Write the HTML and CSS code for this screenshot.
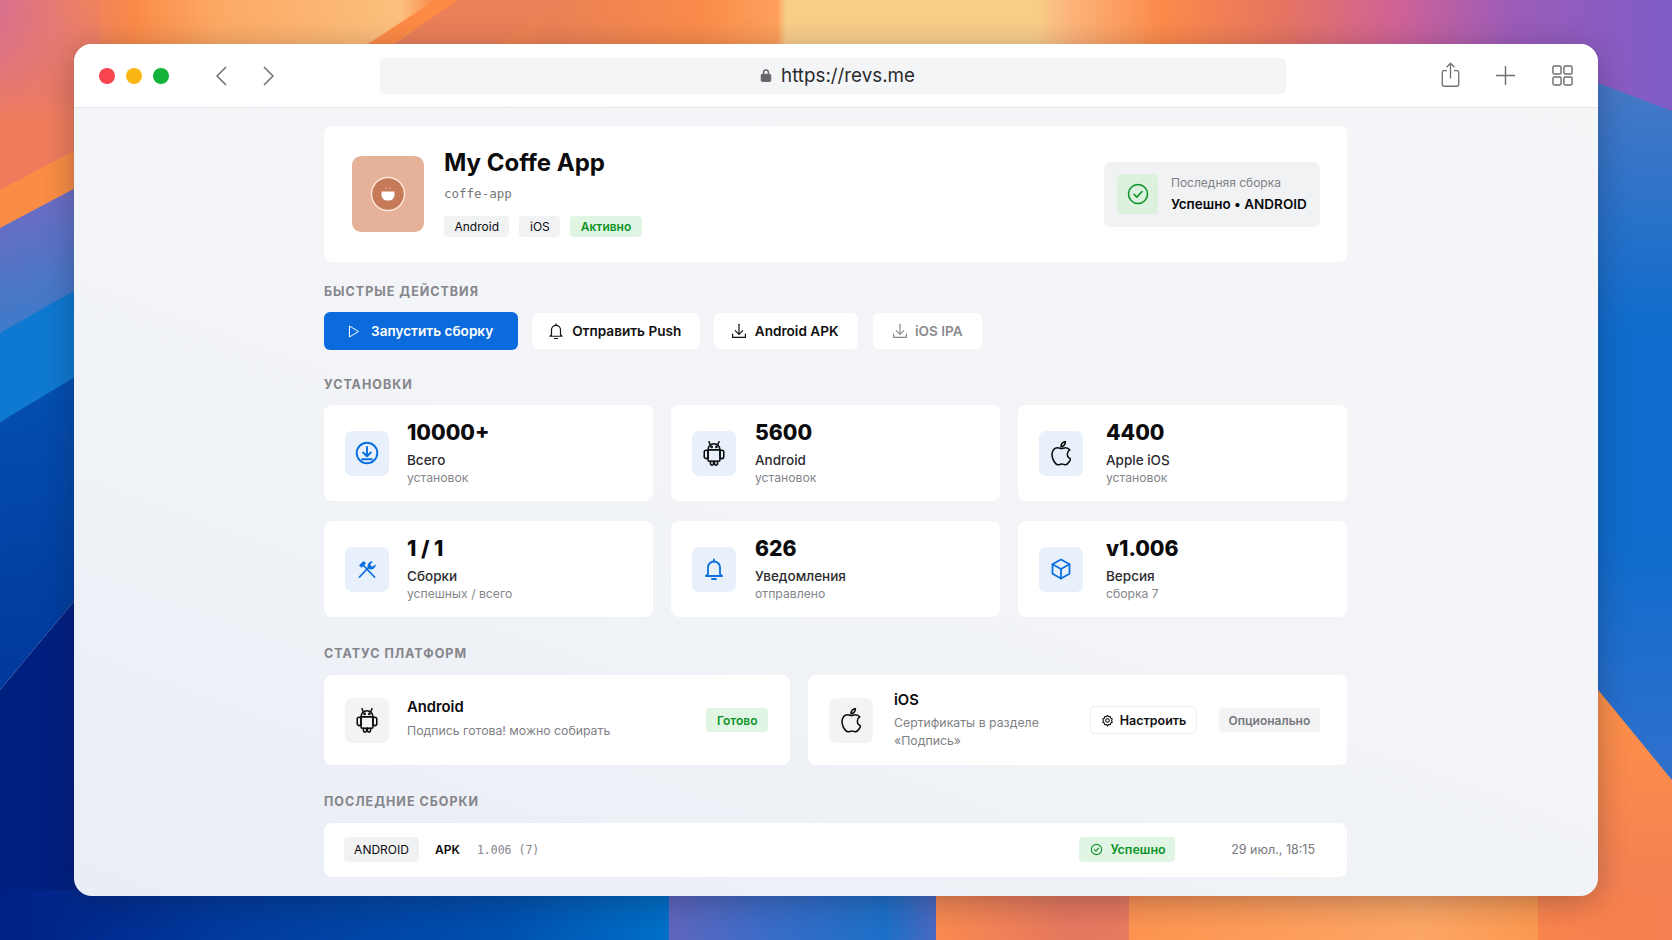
FILE: index.html
```html
<!DOCTYPE html>
<html lang="en">
<head>
  <meta charset="UTF-8" />
  <title>My Coffe App</title>
  <link rel="stylesheet" href="styles.css">
</head>
<body>
  <!-- wallpaper behind the window -->
  <svg class="wallpaper" viewBox="0 0 1672 940" preserveAspectRatio="none" aria-hidden="true">
    <defs>
      <linearGradient id="topBand" x1="0" x2="1672" y1="0" y2="0" gradientUnits="userSpaceOnUse">
        <stop offset="0" stop-color="#d8708f"/>
        <stop offset=".08" stop-color="#f98a48"/>
        <stop offset=".13" stop-color="#fca964"/>
        <stop offset=".24" stop-color="#fcc07e"/>
        <stop offset=".26" stop-color="#f98a48"/>
        <stop offset=".33" stop-color="#ea8055"/>
        <stop offset=".42" stop-color="#f98c4a"/>
        <stop offset=".465" stop-color="#fda05c"/>
        <stop offset=".47" stop-color="#f8cd88"/>
        <stop offset=".62" stop-color="#f8cd88"/>
        <stop offset=".64" stop-color="#fcb47a"/>
        <stop offset=".695" stop-color="#fb8a4a"/>
        <stop offset=".765" stop-color="#e67560"/>
        <stop offset=".835" stop-color="#cf6296"/>
        <stop offset=".905" stop-color="#9b5cb8"/>
        <stop offset="1" stop-color="#7f5cc8"/>
      </linearGradient>
      <linearGradient id="cornerLeft" x1="0" y1="0" x2="0" y2="120" gradientUnits="userSpaceOnUse">
        <stop offset="0" stop-color="#e0757c" stop-opacity="0"/>
        <stop offset="1" stop-color="#ee7c5c"/>
      </linearGradient>
      <linearGradient id="bottomBand" x1="0" x2="1672" y1="0" y2="0" gradientUnits="userSpaceOnUse">
        <stop offset="0" stop-color="#001f85"/>
        <stop offset=".13" stop-color="#003a9c"/>
        <stop offset=".3" stop-color="#0050ae"/>
        <stop offset=".4" stop-color="#0070c8"/>
        <stop offset=".4" stop-color="#5f66bd"/>
        <stop offset=".46" stop-color="#3a6cc8"/>
        <stop offset=".53" stop-color="#1c70c8"/>
        <stop offset=".56" stop-color="#4c68c0"/>
        <stop offset=".56" stop-color="#f98a50"/>
        <stop offset=".64" stop-color="#e5775f"/>
        <stop offset=".675" stop-color="#e87a60"/>
        <stop offset=".675" stop-color="#fd9350"/>
        <stop offset=".85" stop-color="#fda765"/>
        <stop offset=".92" stop-color="#fb9850"/>
        <stop offset=".92" stop-color="#f9844d"/>
        <stop offset="1" stop-color="#f47f50"/>
      </linearGradient>
      <linearGradient id="leftLilac" x1="0" y1="170" x2="40" y2="330" gradientUnits="userSpaceOnUse">
        <stop offset="0" stop-color="#7a68c2"/>
        <stop offset="1" stop-color="#3a7cc9"/>
      </linearGradient>
      <linearGradient id="leftDeep" x1="0" y1="380" x2="40" y2="660" gradientUnits="userSpaceOnUse">
        <stop offset="0" stop-color="#0550b0"/>
        <stop offset="1" stop-color="#003a9c"/>
      </linearGradient>
      <linearGradient id="rightBlue" x1="0" y1="90" x2="0" y2="780" gradientUnits="userSpaceOnUse">
        <stop offset="0" stop-color="#4578c6"/>
        <stop offset=".35" stop-color="#0f6ccc"/>
        <stop offset=".65" stop-color="#0f6ccc"/>
        <stop offset="1" stop-color="#3170cc"/>
      </linearGradient>
      <linearGradient id="rightOrange" x1="0" y1="700" x2="0" y2="940" gradientUnits="userSpaceOnUse">
        <stop offset="0" stop-color="#fd9049"/>
        <stop offset="1" stop-color="#f07c55"/>
      </linearGradient>
    </defs>
    <rect width="1672" height="130" fill="url(#topBand)"/>
    <polygon points="435,0 458,0 394,44 368,44" fill="#fd8a45"/>
    <polygon points="458,0 560,0 500,44 394,44" fill="#ea7f58"/>
    <polygon points="0,0 100,0 100,240 0,240" fill="url(#cornerLeft)"/>
    <polygon points="0,190 100,137 100,190 0,228" fill="#f98d45"/>
    <polygon points="0,228 100,175 100,300 0,333" fill="url(#leftLilac)"/>
    <polygon points="0,333 100,276 100,370 0,422" fill="#0f78d0"/>
    <polygon points="0,422 100,362 100,570 0,690" fill="url(#leftDeep)"/>
    <polygon points="0,690 100,570 100,940 0,940" fill="#00207f"/>
    <polygon points="1590,80 1672,111 1672,790 1590,680" fill="url(#rightBlue)"/>
    <polygon points="1590,680 1672,780 1672,940 1590,940" fill="url(#rightOrange)"/>
    <rect y="890" width="1672" height="50" fill="url(#bottomBand)"/>
  </svg>

  <svg class="sprite" aria-hidden="true">
    <symbol id="i-bell" viewBox="0 0 24 24">
      <path d="M6 17V10.500a6 6 0 0 1 12 0V17l2 2H4z"/><path d="M10 22h4"/><path d="M12 2.500v2"/>
    </symbol>
    <symbol id="i-download" viewBox="0 0 24 24">
      <path d="M12 3v13"/><path d="M7 11.500l5 5 5-5"/><path d="M3.500 16v4.500h17V16"/>
    </symbol>
    <symbol id="i-android" viewBox="2.800 2.200 18.400 21">
      <path d="M7 9.500a5 5 0 0 1 10 0z"/><path d="M8.900 5.300 7.800 2.800"/><path d="M15.100 5.300l1.100-2.500"/>
      <path d="M7 9.500h10v8.700a1 1 0 0 1-1 1H8a1 1 0 0 1-1-1z"/>
      <rect x="3.800" y="10" width="3.200" height="7" rx="1.600"/><rect x="17" y="10" width="3.200" height="7" rx="1.600"/>
      <path d="M9 19.200v2a1.300 1.300 0 0 0 2.600 0v-2"/><path d="M12.400 19.200v2a1.300 1.300 0 0 0 2.600 0v-2"/>
      <circle class="dot" cx="10" cy="7.200" r=".5"/><circle class="dot" cx="14" cy="7.200" r=".5"/>
    </symbol>
    <symbol id="i-apple" viewBox="4.400 2.600 15.200 19.400">
      <path d="M16.900 12.800c0-2.200 1.800-3.200 1.900-3.300-1-1.500-2.600-1.700-3.200-1.700-1.300-.1-2.600.8-3.300.8s-1.700-.8-2.900-.8c-1.500 0-2.900.9-3.600 2.200-1.600 2.700-.4 6.700 1.100 8.900.7 1.100 1.600 2.300 2.800 2.200 1.100 0 1.600-.7 2.900-.7s1.700.7 2.900.7 2-1.100 2.700-2.200c.9-1.200 1.200-2.400 1.200-2.500-.1 0-2.500-.9-2.500-3.600z"/>
      <path d="M14.500 5.800c.6-.7 1-1.700.9-2.700-.9 0-1.900.6-2.500 1.300-.5.600-1 1.600-.9 2.600 1 .1 1.900-.5 2.500-1.200z"/>
    </symbol>
    <symbol id="i-check" viewBox="0 0 24 24">
      <circle cx="12" cy="12" r="9.500"/><path d="M8 12.300l2.800 2.800 5.200-5.600"/>
    </symbol>
  </svg>

  <div class="window">
    <header class="toolbar">
      <div class="lights"><span class="light red"></span><span class="light yellow"></span><span class="light green"></span></div>
      <div class="arrows">
        <svg class="tb-icon" viewBox="0 0 12 20"><path d="M11 1 2 10l9 9"/></svg>
        <svg class="tb-icon" viewBox="0 0 12 20"><path d="M1 1l9 9-9 9"/></svg>
      </div>
      <div class="address">
        <svg class="lock" viewBox="0 0 20 24"><rect x="2" y="10" width="16" height="12" rx="2"/><path class="shackle" d="M6 10V7a4 4 0 0 1 8 0v3"/></svg>
        <span>https://revs.me</span>
      </div>
      <div class="tb-actions">
        <svg class="tb-icon share" viewBox="0 0 24 30"><path d="M8 10H4.500a2 2 0 0 0-2 2v14a2 2 0 0 0 2 2h15a2 2 0 0 0 2-2V12a2 2 0 0 0-2-2H16"/><path d="M12 19V2"/><path d="M7.500 6 12 1.500 16.500 6"/></svg>
        <svg class="tb-icon plus" viewBox="0 0 22 22"><path d="M11 1v20"/><path d="M1 11h20"/></svg>
        <svg class="tb-icon grid-icon" viewBox="0 0 22 22"><rect x="1" y="1" width="8.500" height="8.500" rx="1.500"/><rect x="12.500" y="1" width="8.500" height="8.500" rx="1.500"/><rect x="1" y="12.500" width="8.500" height="8.500" rx="1.500"/><rect x="12.500" y="12.500" width="8.500" height="8.500" rx="1.500"/></svg>
      </div>
    </header>

    <main class="content">
      <section class="app-card">
        <div class="app-logo">
          <svg viewBox="0 0 36 36">
            <circle cx="18" cy="18" r="16.500" fill="#c67a58" stroke="#fbe8da" stroke-width="1.500"/>
            <path d="M11.500 15.500h13v3.500a5.500 5.500 0 0 1-5.500 5.500h-2a5.500 5.500 0 0 1-5.500-5.500z" fill="#fff"/>
            <path d="M16 11.800v1M20 11.800v1" stroke="#ecc9b5" stroke-width="1"/>
          </svg>
        </div>
        <div class="app-info">
          <h1>My Coffe App</h1>
          <div class="slug">coffe-app</div>
          <div class="tags">
            <span class="tag">Android</span>
            <span class="tag">iOS</span>
            <span class="tag tag-green">Активно</span>
          </div>
        </div>
        <div class="last-build">
          <div class="last-icon"><svg class="ic green-ic"><use href="#i-check"/></svg></div>
          <div>
            <div class="last-label">Последняя сборка</div>
            <div class="last-value">Успешно • ANDROID</div>
          </div>
        </div>
      </section>

      <h2 class="section-title">Быстрые действия</h2>
      <div class="actions">
        <a class="btn btn-primary" href="#">
          <svg class="btn-ic" viewBox="0 0 24 24"><path d="M6 3.500 20 12 6 20.500z"/></svg>Запустить сборку
        </a>
        <a class="btn" href="#"><svg class="btn-ic"><use href="#i-bell"/></svg>Отправить Push</a>
        <a class="btn" href="#"><svg class="btn-ic"><use href="#i-download"/></svg>Android APK</a>
        <a class="btn btn-muted" href="#"><svg class="btn-ic"><use href="#i-download"/></svg>iOS IPA</a>
      </div>

      <h2 class="section-title">Установки</h2>
      <div class="stats">
        <div class="stat">
          <div class="stat-icon"><svg class="ic ic-circle blue-ic" viewBox="0 0 24 24"><circle cx="12" cy="12" r="9.500"/><path d="M12 6.500v8"/><path d="M8.500 11.500 12 15l3.500-3.500"/><path d="M7.500 17.800h9"/></svg></div>
          <div class="stat-text"><div class="stat-value">10000+</div><div class="stat-label">Всего</div><div class="stat-sub">установок</div></div>
        </div>
        <div class="stat">
          <div class="stat-icon"><svg class="ic-android"><use href="#i-android"/></svg></div>
          <div class="stat-text"><div class="stat-value">5600</div><div class="stat-label">Android</div><div class="stat-sub">установок</div></div>
        </div>
        <div class="stat">
          <div class="stat-icon"><svg class="ic-apple"><use href="#i-apple"/></svg></div>
          <div class="stat-text"><div class="stat-value">4400</div><div class="stat-label">Apple iOS</div><div class="stat-sub">установок</div></div>
        </div>
        <div class="stat">
          <div class="stat-icon"><svg class="ic blue-ic" viewBox="0 0 24 24"><path d="M4.500 20 13.500 10.500"/><path class="solid" d="M13 11c-1-2-.3-4.500 1.500-5.800 1-.7 2.200-1 3.300-.8l-2.300 2.800.5 1.800 1.800.5 2.800-2.300c.2 1.100-.1 2.300-.8 3.300-1.300 1.800-3.800 2.500-5.800 1.500z"/><path d="M8.500 8.500 19.500 20"/><path class="solid" d="M4 8.500 8.500 4l2.500 2.200-4.500 4.500z"/></svg></div>
          <div class="stat-text"><div class="stat-value">1 / 1</div><div class="stat-label">Сборки</div><div class="stat-sub">успешных / всего</div></div>
        </div>
        <div class="stat">
          <div class="stat-icon"><svg class="ic blue-ic"><use href="#i-bell"/></svg></div>
          <div class="stat-text"><div class="stat-value">626</div><div class="stat-label">Уведомления</div><div class="stat-sub">отправлено</div></div>
        </div>
        <div class="stat">
          <div class="stat-icon"><svg class="ic blue-ic" viewBox="0 0 24 24"><path d="M12 2.500 20.500 7.300v9.400L12 21.500l-8.500-4.800V7.300z"/><path d="M3.500 7.300 12 12l8.500-4.700"/><path d="M12 12v9.500"/></svg></div>
          <div class="stat-text"><div class="stat-value">v1.006</div><div class="stat-label">Версия</div><div class="stat-sub">сборка 7</div></div>
        </div>
      </div>

      <h2 class="section-title">Статус платформ</h2>
      <div class="platforms">
        <div class="platform">
          <div class="platform-icon"><svg class="ic-android"><use href="#i-android"/></svg></div>
          <div class="platform-text">
            <div class="platform-name">Android</div>
            <div class="platform-sub">Подпись готова! можно собирать</div>
          </div>
          <span class="badge badge-green">Готово</span>
        </div>
        <div class="platform">
          <div class="platform-icon"><svg class="ic-apple"><use href="#i-apple"/></svg></div>
          <div class="platform-text narrow">
            <div class="platform-name">iOS</div>
            <div class="platform-sub">Сертификаты в разделе «Подпись»</div>
          </div>
          <a class="setup-btn" href="#">
            <svg class="setup-ic" viewBox="0 0 24 24"><path d="M12 2.500l2 2.600 3.200-.5.700 3.200 2.900 1.500-1.300 2.900 1.300 2.900-2.900 1.500-.7 3.200-3.200-.5-2 2.600-2-2.600-3.200.5-.7-3.200-2.900-1.500 1.300-2.900-1.300-2.900 2.900-1.500.7-3.200 3.200.5z"/><circle cx="12" cy="12" r="3.300"/></svg>Настроить
          </a>
          <span class="badge badge-gray">Опционально</span>
        </div>
      </div>

      <h2 class="section-title">Последние сборки</h2>
      <div class="build-row">
        <span class="tag tag-build">ANDROID</span>
        <span class="build-type">APK</span>
        <span class="build-version">1.006 (7)</span>
        <span class="badge badge-success"><svg class="mini-ic"><use href="#i-check"/></svg>Успешно</span>
        <span class="build-date">29 июл., 18:15</span>
      </div>
    </main>
  </div>
</body>
</html>
```
FILE: styles.css
```css
* {
  box-sizing: border-box;
}

body {
  margin: 0;
  height: 940px;
  padding: 44px 74px;
  overflow: hidden;
  position: relative;
  font-family: Inter, "Noto Sans", sans-serif;
  color: #0b0b0d;
}

svg {
  fill: none;
  stroke: currentColor;
  stroke-width: 1.6;
  stroke-linecap: round;
  stroke-linejoin: round;
}

.wallpaper {
  position: absolute;
  inset: 0;
  width: 100%;
  height: 100%;
  stroke: none;
}

.sprite {
  position: absolute;
  width: 0;
  height: 0;
}

.window {
  position: relative;
  width: 1524px;
  height: 852px;
  border-radius: 18px;
  overflow: hidden;
  background: linear-gradient(20deg, #e9edf5 0%, #f2f4f7 45%, #f5f6f8 100%);
  box-shadow: 0 6px 30px rgba(20, 20, 40, 0.3);
}

/* toolbar */
.toolbar {
  height: 64px;
  background-color: #fff;
  border-bottom: 1px solid #e4e5e8;
  display: flex;
  align-items: center;
  padding: 0 0 0 25px;
}

.lights {
  display: flex;
  gap: 11px;
  width: 90px;
}

.light {
  width: 16px;
  height: 16px;
  border-radius: 50%;
}

.red { background-color: #f9434e; }
.yellow { background-color: #fbb615; }
.green { background-color: #13b33a; }

.tb-icon {
  color: #6e6e73;
  stroke-width: 1.5;
  stroke-linecap: butt;
  flex-shrink: 0;
}

.arrows {
  display: flex;
  gap: 36px;
  margin-left: 26px;
}

.arrows .tb-icon {
  width: 12px;
  height: 20px;
}

.address {
  width: 906px;
  height: 36px;
  flex-shrink: 0;
  border-radius: 5px;
  background-color: #f4f5f7;
  display: flex;
  align-items: center;
  justify-content: center;
  gap: 9px;
  padding-left: 9px;
  font-size: 18.800px;
  color: #2b2b2e;
  margin-left: 105px;
}

.lock {
  width: 12px;
  height: 15px;
  fill: #66666b;
  stroke: #66666b;
  margin-top: -1px;
}

.lock .shackle {
  fill: none;
  stroke-width: 2.5;
}

.tb-actions {
  display: flex;
  align-items: center;
  margin-left: 154px;
  gap: 34px;
}

.share {
  width: 21px;
  height: 26px;
  margin-top: -2px;
}

.plus,
.grid-icon {
  width: 21px;
  height: 21px;
}

.grid-icon {
  margin-left: 2px;
}

/* page */
.content {
  width: 1023px;
  margin: 18px 0 0 250px;
}

.app-card {
  height: 136px;
  background-color: #fff;
  border-radius: 8px;
  display: flex;
  align-items: center;
  padding: 0 27px 0 28px;
}

.app-logo {
  width: 72px;
  height: 76px;
  border-radius: 9px;
  background-color: #e6b199;
  display: flex;
  align-items: center;
  justify-content: center;
}

.app-logo svg {
  width: 36px;
  height: 36px;
  stroke: none;
}

.app-info {
  margin: 0 0 4px 20px;
  flex: 1;
}

.app-info h1 {
  font-size: 24px;
  line-height: 30px;
  font-weight: 700;
  margin: 0;
}

.slug {
  font-family: "DejaVu Sans Mono", monospace;
  font-size: 12.500px;
  color: #77777c;
  line-height: 16px;
  margin-top: 8px;
}

.tags {
  display: flex;
  gap: 10px;
  margin-top: 14px;
}

.tag {
  height: 21px;
  padding: 0 10.500px;
  border-radius: 4px;
  background-color: #f1f2f4;
  font-size: 12px;
  line-height: 21px;
}

.tag-green {
  background-color: #e1f5e4;
  color: #0c9428;
  font-weight: 600;
}

.last-build {
  width: 216px;
  height: 65px;
  border-radius: 7px;
  background-color: #f1f2f4;
  display: flex;
  align-items: center;
  gap: 13px;
  padding-left: 13px;
}

.last-icon {
  width: 41px;
  height: 40px;
  border-radius: 4px;
  background-color: #dcf2df;
  display: flex;
  align-items: center;
  justify-content: center;
}

.ic {
  width: 24px;
  height: 24px;
}

.ic-circle {
  width: 26px;
  height: 26px;
}

.ic-android {
  width: 22px;
  height: 25px;
  stroke-width: 1.3;
}

.ic-apple {
  width: 20px;
  height: 25px;
  stroke-width: 1.200;
}

.solid {
  fill: currentColor;
  stroke: none;
}

.green-ic { color: #0c9428; }
.blue-ic { color: #0b6fe0; stroke-width: 1.8; }

.last-label {
  font-size: 12px;
  color: #808085;
  line-height: 16px;
}

.last-value {
  font-size: 13.500px;
  font-weight: 600;
  line-height: 18px;
  margin-top: 4px;
  white-space: nowrap;
}

.section-title {
  font-size: 12.500px;
  line-height: 16px;
  font-weight: 700;
  letter-spacing: 1px;
  text-transform: uppercase;
  color: #85858b;
  margin: 29px 0 13px;
}

.app-card + .section-title {
  margin: 22px 0 12px;
}

.actions + .section-title {
  margin: 27px 0 12px;
}

.actions {
  display: flex;
  gap: 14px;
  align-items: center;
}

.btn {
  height: 36px;
  padding: 0 19px 0 15.500px;
  border-radius: 6px;
  background-color: #fff;
  color: #111;
  font-size: 13.600px;
  font-weight: 600;
  text-decoration: none;
  display: flex;
  align-items: center;
  gap: 7px;
}

.btn-ic {
  width: 18px;
  height: 18px;
}

.btn-primary {
  height: 38px;
  background-color: #0b6bdc;
  color: #fff;
  padding: 0 24.500px 0 21.500px;
  gap: 10.500px;
}

.btn-primary .btn-ic {
  width: 15px;
  height: 15px;
}

.btn-muted {
  color: #8a8a90;
  padding-left: 18.500px;
  gap: 6px;
  margin-left: 1px;
}

.stats {
  display: grid;
  grid-template-columns: repeat(3, 1fr);
  gap: 20px 18px;
}

.stat {
  height: 96px;
  background-color: #fff;
  border-radius: 8px;
  display: flex;
  align-items: center;
  gap: 18px;
  padding: 0 20px 0 21px;
}

.stat:nth-child(3n+2) {
  gap: 19px;
}

.stat:nth-child(3n) {
  gap: 23px;
}

.stat-icon {
  width: 44px;
  height: 45px;
  border-radius: 7px;
  background-color: #e8f1fb;
  display: flex;
  align-items: center;
  justify-content: center;
  flex-shrink: 0;
}

.stat-text {
  padding-bottom: 2px;
}

.stat-value {
  font-size: 21.200px;
  line-height: 26px;
  font-weight: 800;
}

.stat-label {
  font-size: 13.500px;
  line-height: 18px;
  font-weight: 500;
  color: #2c2c30;
  margin-top: 6px;
}

.stat-sub {
  font-size: 12.200px;
  line-height: 16px;
  color: #85858b;
  margin-top: 1px;
}

.platforms {
  display: grid;
  grid-template-columns: 466px 1fr;
  gap: 18px;
}

.platform {
  height: 90px;
  background-color: #fff;
  border-radius: 8px;
  display: flex;
  align-items: center;
  padding: 0 26px 0 21px;
}

.platform:first-child {
  padding-right: 22px;
}

.platform-icon {
  width: 44px;
  height: 45px;
  border-radius: 7px;
  background-color: #f3f3f5;
  display: flex;
  align-items: center;
  justify-content: center;
  margin-right: 18px;
  flex-shrink: 0;
}

.platform:last-child .platform-icon {
  margin-right: 21px;
}

.platform-text {
  flex: 1;
  margin-bottom: 3px;
}

.platform-text.narrow {
  flex: none;
  width: 180px;
  margin: 0 16px 0 0;
}

.platform-name {
  font-size: 14.800px;
  line-height: 18px;
  font-weight: 600;
}

.platform-sub {
  font-size: 12.300px;
  line-height: 18px;
  color: #7f7f85;
  margin-top: 6px;
}

.narrow .platform-sub {
  margin-top: 5px;
}

.badge {
  height: 24px;
  padding: 0 10.500px;
  border-radius: 4px;
  font-size: 12px;
  font-weight: 600;
  display: flex;
  align-items: center;
  white-space: nowrap;
}

.badge-green {
  background-color: #e1f5e4;
  color: #0c9428;
}

.badge-gray {
  background-color: #f3f3f5;
  color: #77777c;
  padding: 0 9.500px;
  margin-left: 22px;
}

.setup-btn {
  height: 28px;
  width: 107px;
  border: 1px solid #eeeef1;
  border-radius: 5px;
  font-size: 12.500px;
  font-weight: 600;
  color: #111;
  text-decoration: none;
  display: flex;
  align-items: center;
  justify-content: center;
  gap: 6px;
}

.setup-ic {
  width: 13px;
  height: 13px;
  stroke-width: 2;
}

.build-row {
  height: 54px;
  background-color: #fff;
  border-radius: 8px;
  display: flex;
  align-items: center;
  padding: 0 32px 1px 20px;
}

.tag-build {
  height: 25px;
  line-height: 25px;
  width: 75px;
  text-align: center;
  padding: 0;
  font-size: 12px;
}

.build-type {
  font-size: 12px;
  font-weight: 600;
  margin-left: 16px;
}

.build-version {
  font-family: "DejaVu Sans Mono", monospace;
  font-size: 11.500px;
  color: #85858b;
  margin-left: 17px;
  flex: 1;
}

.badge-success {
  height: 25px;
  font-size: 12.500px;
  background-color: #e1f5e4;
  color: #0c9428;
  gap: 7px;
  padding: 0 9.500px 0 11px;
}

.mini-ic {
  width: 13px;
  height: 13px;
  stroke-width: 2;
}

.build-date {
  font-size: 12.500px;
  color: #77777c;
  margin-left: 56px;
}
```
